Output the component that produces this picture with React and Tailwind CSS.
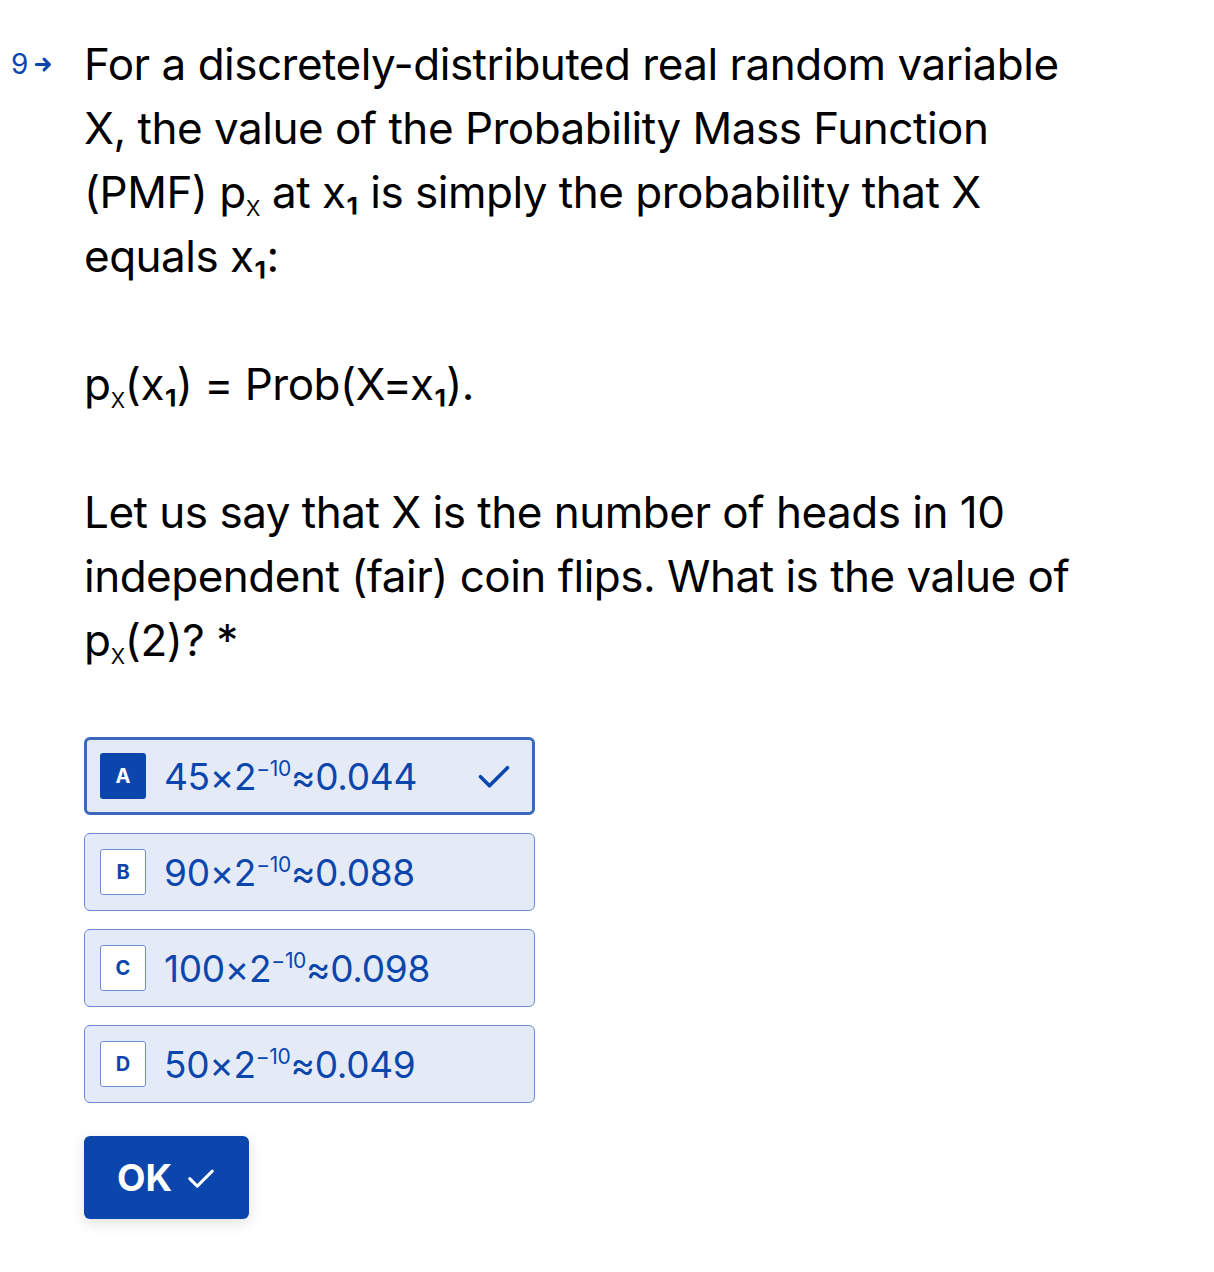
const options = [
  { key: "A", base: "45×2", rest: "≈0.044", selected: true },
  { key: "B", base: "90×2", rest: "≈0.088" },
  { key: "C", base: "100×2", rest: "≈0.098" },
  { key: "D", base: "50×2", rest: "≈0.049" },
];

const Check = ({ className }) => (
  <svg viewBox="0 0 24 24" fill="none" stroke="currentColor" strokeWidth="2.4" strokeLinecap="round" strokeLinejoin="round" className={className}>
    <path d="M3 12.5l6 6L21 6.5" />
  </svg>
);

// thin subscript x, like the reference's pₓ
const Sx = () => <span className="relative top-[8px] text-[28px] leading-none font-light">x</span>;

const App = () => {
  return (
    <div className="min-h-[1272px] w-[1214px] bg-white font-['Inter',sans-serif] text-black">
      <div className="flex pt-[32px]">
        <div className="flex w-[84px] shrink-0 items-center gap-[6px] self-start pl-[11px] h-[64px] text-[#0b46ad]">
          <span className="text-[28px] leading-none">9</span>
          <svg viewBox="0 0 16 16" className="h-[19px] w-[19px]" fill="none" stroke="currentColor" strokeWidth="2.6" strokeLinecap="round" strokeLinejoin="round">
            <path d="M2 8h11M8.5 3.5L13 8l-4.5 4.5" />
          </svg>
        </div>
        <div className="w-[1000px]">
          <div className="text-[44px] leading-[64px] tracking-[-0.5px]">
            <p>
              For a discretely-distributed real random variable X, the value of the Probability Mass Function (PMF) p<Sx /> at x₁ is
              simply the probability that X equals x₁:
            </p>
            <p className="mt-[64px]">
              p<Sx />(x₁) = Prob(X=x₁).
            </p>
            <p className="mt-[64px]">
              Let us say that X is the number of heads in 10 independent (fair) coin flips. What is the value of p<Sx />(2)? *
            </p>
          </div>
          <div className="mt-[65px] flex w-[451px] flex-col gap-[18px]">
            {options.map((o) => (
              <div
                key={o.key}
                className={`flex h-[78px] items-center rounded-[6px] bg-[#e5ebf6] pr-[20px] ${
                  o.selected ? "border-[3px] border-[#3a68bd] pl-[13px]" : "border-[1.5px] border-[#6c90cf] pl-[15px]"
                }`}
              >
                <div
                  className={`flex h-[46px] w-[46px] shrink-0 items-center justify-center rounded-[3px] text-[20px] font-bold ${
                    o.selected ? "bg-[#0b46ad] text-white" : "border-[1.5px] border-[#6c90cf] bg-white text-[#0b46ad]"
                  }`}
                >
                  {o.key}
                </div>
                <span className="ml-[18px] flex-1 text-[37px] leading-none tracking-[-0.3px] text-[#0b46ad]">
                  {o.base}
                  <span className="relative -top-[14px] text-[21px] leading-none">−10</span>
                  {o.rest}
                </span>
                {o.selected && <Check className="h-[36px] w-[36px] text-[#0b46ad]" />}
              </div>
            ))}
          </div>
          <button className="mt-[33px] flex h-[83px] w-[165px] items-center justify-center gap-[14px] rounded-[6px] bg-[#0b46ad] text-white shadow-[0_4px_14px_rgba(0,0,0,0.12)]">
            <span className="text-[37px] font-bold">OK</span>
            <Check className="h-[30px] w-[30px]" />
          </button>
        </div>
      </div>
    </div>
  );
};

export default App;
